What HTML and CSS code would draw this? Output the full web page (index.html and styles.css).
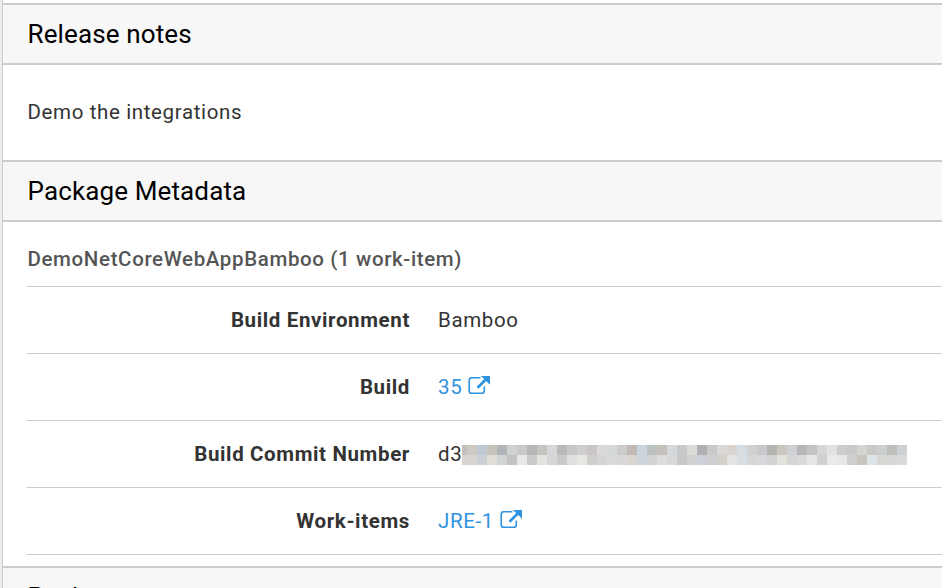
FILE: index.html
```html
<!DOCTYPE html>
<html lang="en">
<head>
<meta charset="utf-8">
<title>Release</title>
<link rel="stylesheet" href="styles.css">
</head>
<body>
<main class="panel">
  <h2 class="section-title">Release notes</h2>
  <p class="notes">Demo the integrations</p>
  <h2 class="section-title">Package Metadata</h2>
  <section class="metadata">
    <h3 class="package">DemoNetCoreWebAppBamboo (1 work-item)</h3>
    <dl class="rows">
      <div class="row"><dt>Build Environment</dt><dd>Bamboo</dd></div>
      <div class="row"><dt>Build</dt><dd><a class="link"><span>35</span><svg class="external" viewBox="0 0 22 20"><path d="M12.5 2.8H3.8Q1.2 2.8 1.2 5.4V15.7Q1.2 18.3 3.8 18.3H13.7Q16.3 18.3 16.3 15.7V11.5" fill="none" stroke="currentColor" stroke-width="1.6"/><path d="M9.5 12.8L18 4.3" stroke="currentColor" stroke-width="2.7"/><path d="M13 1H22V9.8Z" fill="currentColor"/></svg></a></dd></div>
      <div class="row"><dt>Build Commit Number</dt><dd><span class="hash">d3</span><span class="mosaic" id="mosaic"></span></dd></div>
      <div class="row"><dt>Work-items</dt><dd><a class="link"><span>JRE-1</span><svg class="external" viewBox="0 0 22 20"><path d="M12.5 2.8H3.8Q1.2 2.8 1.2 5.4V15.7Q1.2 18.3 3.8 18.3H13.7Q16.3 18.3 16.3 15.7V11.5" fill="none" stroke="currentColor" stroke-width="1.6"/><path d="M9.5 12.8L18 4.3" stroke="currentColor" stroke-width="2.7"/><path d="M13 1H22V9.8Z" fill="currentColor"/></svg></a></dd></div>
    </dl>
  </section>
  <h2 class="section-title">Packages</h2>
</main>
<script src="mosaic.js"></script>
</body>
</html>
```
FILE: styles.css
```css
* { box-sizing: border-box; }

body {
  margin: 0;
  height: 588px;
  overflow: hidden;
  background: #ededed;
  font-family: Roboto, "Liberation Sans", sans-serif;
  font-size: 20.5px;
  letter-spacing: 0.63px;
  color: #333;
}

.panel {
  margin-left: 2px;
  padding-top: 3px;
  height: 588px;
  overflow: hidden;
  border-left: 1px solid #ccc;
  background: #fff;
}

.section-title {
  margin: 0;
  height: 62px;
  padding-left: 24.5px;
  border-top: 2px solid #ccc;
  border-bottom: 2px solid #ccc;
  background: #f7f7f7;
  color: #000;
  font-size: 26px;
  font-weight: 400;
  line-height: 58px;
  letter-spacing: 0.13px;
}

.notes {
  margin: 0;
  height: 95px;
  padding-left: 24.5px;
  line-height: 94px;
}

.metadata {
  height: 344px;
  padding-left: 24px;
}

.package {
  margin: 0;
  height: 65px;
  padding-left: 0.5px;
  border-bottom: 1px solid #ccc;
  color: #555;
  font-size: inherit;
  font-weight: 500;
  line-height: 75px;
}

.rows { margin: 0; }

.row {
  display: grid;
  grid-template-columns: 383px 1fr;
  column-gap: 28px;
  height: 67px;
  border-bottom: 1px solid #ccc;
  line-height: 66px;
}

dt {
  font-weight: 700;
  text-align: right;
}

dd {
  display: flex;
  align-items: center;
  margin: 0;
}

.hash { width: 24px; }

.link {
  display: flex;
  align-items: center;
  color: #2f93e0;
}

.external {
  width: 22px;
  height: 20px;
  margin: 0 0 4px 6px;
}

.mosaic {
  display: grid;
  grid-template-columns: 5px repeat(44, 10px);
  grid-auto-rows: 10px;
  margin-top: 2px;
}
```
FILE: mosaic.js
```js
const tones = [
  "c3bfbd cfcac3 c1c9d2 c6c3bb b0b5ba d0d1d1 c8c8c9 b8b5b7 c4c5c1 d5d8da b9b9b9 c5c7c9 cfd0ce c9c5c5 d9d9d9 d5d9d8 cccbc9 c1b9b6 c9d4dc bcc2c0 c6c0bb d3d8dc cac9ca dbdad7 aeb0b4 c9c9ca dad9d5 dad4d0 d6dde2 d1d1d1 c7c9cc b4b4b1 c9c5bf cdd1d5 b8b6b8 c1c4c3 d5d6d8 e2e2e2 cbcecd c9c9c9 d5d4d0 cac9c7 cccfcf c0bebb cbd0d5",
  "d9d5d1 d9d5d1 caced5 e1ddd5 d0d4d5 c2c2c5 e7e7e7 cbcbcc e4e3e0 d6d6d6 cacaca dee0e0 e6e7e2 d0cfce d5d5d6 d9d9d9 d8d8d8 d8d4d0 ced4dc d2d2d3 dddddb d8d8db c9c7c8 d1cfd1 cdd1d7 cfcfd1 d2d0c8 e3e3e3 d8dde1 d6d6d6 d6d8dc d3d2d2 e3e1dc d5d5d5 d9d9dc e5e5e5 d0d0d0 e9ebea e8e8e7 cfcfd1 c9c5bf dfe4e8 d7d7d4 d7d7d6 d9dadc"
];
const mosaic = document.getElementById("mosaic");
for (const tone of tones.join(" ").split(" ")) {
  const cell = document.createElement("i");
  cell.style.background = "#" + tone;
  mosaic.append(cell);
}
```
